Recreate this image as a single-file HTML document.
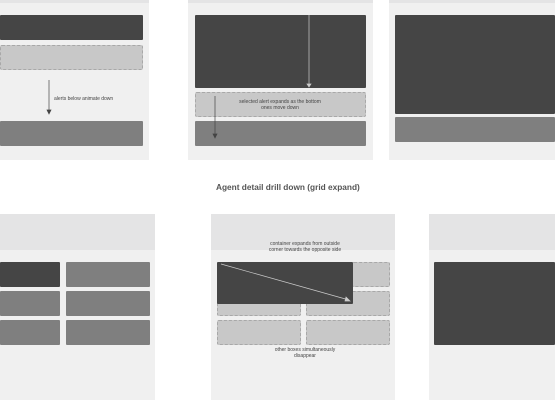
<!DOCTYPE html>
<html><head><style>
body{margin:0;width:555px;height:400px;background:#fff;position:relative;overflow:hidden;font-family:"Liberation Sans",sans-serif}
div{position:absolute;box-sizing:border-box}
.p{background:#f0f0f0}
.h{background:#e4e4e5}
.d{background:#454545;border-radius:1px}
.g{background:#7f7f7f;border-radius:1px}
.l{background:#c8c8c8;border:1px dashed #a8a8a8;border-radius:2px}
.t{font-size:5px;color:#444;text-align:center;line-height:6px;white-space:nowrap}
</style></head><body>
<div class="p" style="left:0;top:0;width:149px;height:160px"></div>
<div class="h" style="left:0;top:0;width:149px;height:3px"></div>
<div class="d" style="left:0;top:15px;width:143px;height:25px"></div>
<div class="l" style="left:0;top:45px;width:143px;height:25px"></div>
<div class="g" style="left:0;top:121px;width:143px;height:25px"></div>
<div class="t" style="left:54px;top:96px;text-align:left">alerts below animate down</div>

<div class="p" style="left:188px;top:0;width:185px;height:160px"></div>
<div class="h" style="left:188px;top:0;width:185px;height:3px"></div>
<div class="d" style="left:195px;top:15px;width:171px;height:73px"></div>
<div class="l" style="left:195px;top:92px;width:171px;height:25px"></div>
<div class="g" style="left:195px;top:121px;width:171px;height:25px"></div>
<div class="t" style="left:230px;top:99px;width:100px">selected alert expands as the bottom<br>ones move down</div>

<div class="p" style="left:389px;top:0;width:166px;height:160px"></div>
<div class="h" style="left:389px;top:0;width:166px;height:3px"></div>
<div class="d" style="left:395px;top:15px;width:160px;height:99px"></div>
<div class="g" style="left:395px;top:117px;width:160px;height:25px"></div>

<div style="left:216px;top:182px;width:138px;text-align:center;font-size:8.3px;font-weight:bold;color:#555;white-space:nowrap">Agent detail drill down (grid expand)</div>

<div class="p" style="left:0;top:214px;width:155px;height:186px"></div>
<div class="h" style="left:0;top:214px;width:155px;height:36px"></div>
<div class="d" style="left:0;top:262px;width:60px;height:25px"></div>
<div class="g" style="left:66px;top:262px;width:84px;height:25px"></div>
<div class="g" style="left:0;top:291px;width:60px;height:25px"></div>
<div class="g" style="left:66px;top:291px;width:84px;height:25px"></div>
<div class="g" style="left:0;top:320px;width:60px;height:25px"></div>
<div class="g" style="left:66px;top:320px;width:84px;height:25px"></div>

<div class="p" style="left:211px;top:214px;width:184px;height:186px"></div>
<div class="h" style="left:211px;top:214px;width:184px;height:36px"></div>
<div class="l" style="left:217px;top:291px;width:84px;height:25px"></div>
<div class="l" style="left:306px;top:291px;width:84px;height:25px"></div>
<div class="l" style="left:217px;top:320px;width:84px;height:25px"></div>
<div class="l" style="left:306px;top:320px;width:84px;height:25px"></div>
<div class="l" style="left:352px;top:262px;width:38px;height:25px"></div>
<div class="d" style="left:217px;top:262px;width:136px;height:42px"></div>
<div class="t" style="left:250px;top:241px;width:110px">container expands from outside<br>corner towards the opposite side</div>
<div class="t" style="left:250px;top:347px;width:110px">other boxes simultaneously<br>disappear</div>

<div class="p" style="left:429px;top:214px;width:126px;height:186px"></div>
<div class="h" style="left:429px;top:214px;width:126px;height:36px"></div>
<div class="d" style="left:434px;top:262px;width:121px;height:83px"></div>

<svg style="position:absolute;left:0;top:0" width="555" height="400">
<g stroke="#444" stroke-width="0.7" fill="#444">
<line x1="49" y1="80" x2="49" y2="112"/><polygon points="47,110 51,110 49,114"/>
<line x1="215" y1="96" x2="215" y2="136"/><polygon points="213,134 217,134 215,138"/>
</g>
<g stroke="#ccc" stroke-width="0.7" fill="#ccc">
<line x1="309" y1="15" x2="309" y2="85"/><polygon points="307,84 311,84 309,87"/>
<line x1="221" y1="264" x2="349" y2="300"/><polygon points="346,297 350,301 345,301"/>
</g>
</svg>
</body></html>
